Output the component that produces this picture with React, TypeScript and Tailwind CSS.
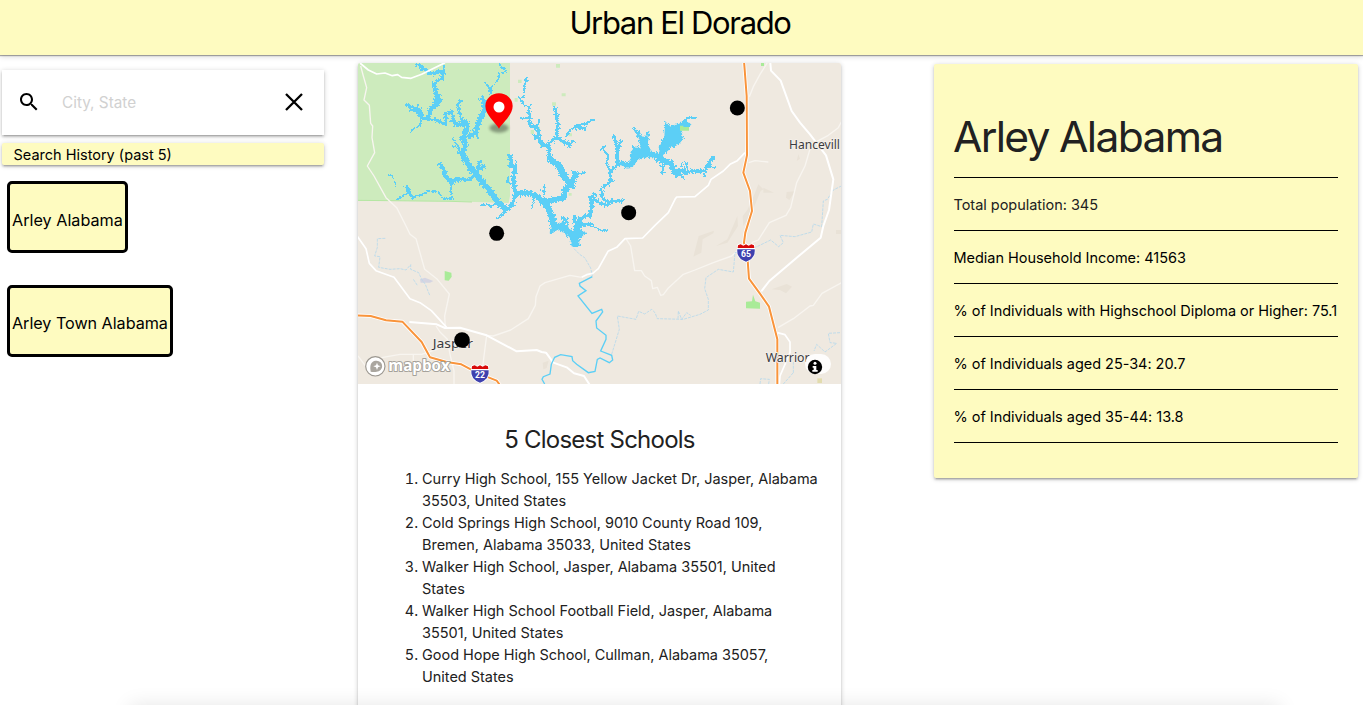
const schools = [
  ["Curry High School, 155 Yellow Jacket Dr, Jasper, Alabama", "35503, United States"],
  ["Cold Springs High School, 9010 County Road 109,", "Bremen, Alabama 35033, United States"],
  ["Walker High School, Jasper, Alabama 35501, United", "States"],
  ["Walker High School Football Field, Jasper, Alabama", "35501, United States"],
  ["Good Hope High School, Cullman, Alabama 35057,", "United States"],
];

const stats = [
  "Total population: 345",
  "Median Household Income: 41563",
  "% of Individuals with Highschool Diploma or Higher: 75.1",
  "% of Individuals aged 25-34: 20.7",
  "% of Individuals aged 35-44: 13.8",
];

const history = ["Arley Alabama", "Arley Town Alabama"];

const cardShadow =
  "shadow-[0_2px_2px_0_rgba(0,0,0,0.14),0_3px_1px_-2px_rgba(0,0,0,0.12),0_1px_5px_0_rgba(0,0,0,0.2)]";

/* Lake channels as [path, width], in map units (three to a pixel). */
const lake: [string, number][] = [
  ["M195 22 L215 28 L212 38 L228 40 L238 55 L262 45 L278 42 L276 62 L262 72 L248 86 L256 98 L254 112 L264 118 L270 134 L256 150 L240 155 L236 186", 8],
  ["M278 28 L280 50", 6],
  ["M256 98 L258 130 L244 156 L232 186", 8],
  ["M166 143 L178 150 L192 150", 7],
  ["M178 162 L195 160 L208 172 L212 184 L232 188 L262 190 L284 206 L286 172 L304 168 L310 192 L296 196", 8],
  ["M195 150 L208 165 L212 184", 12],
  ["M180 228 L190 214 L208 208 L212 184", 5],
  ["M310 202 L345 205", 12],
  ["M330 130 L322 148 L328 168 L334 196", 7],
  ["M340 190 L352 210 L338 245 L346 262", 14],
  ["M335 290 L346 262", 14],
  ["M328 282 L345 310 L360 335 L380 355 L400 382 L420 405 L440 435 L468 462", 16],
  ["M340 305 L365 340 L400 385", 10],
  ["M448 22 L452 34 L462 36 L466 46 L446 50 L440 75 L424 90 L420 115", 5],
  ["M403 75 L416 95 L420 115", 6],
  ["M392 122 L404 140 L400 165 L385 195 L378 225 L352 244", 13],
  ["M374 222 L384 246", 6],
  ["M306 245 L322 268 L300 272 M322 268 L328 290", 5],
  ["M265 320 L282 342 L285 360 L304 375 L325 365 L352 372 L380 352 L388 312 M388 340 L402 325", 9],
  ["M276 350 L300 378 L325 368", 9],
  ["M304 375 L300 405 L310 430 M304 425 L275 425 L265 408 L236 402 L210 415 L188 420 L172 408 L160 416 L138 431", 5],
  ["M165 388 L176 405 L190 425", 7],
  ["M112 356 L125 355 L127 368 M132 372 L138 390", 4],
  ["M468 462 L455 475 L436 488", 6],
  ["M388 446 L410 442 L420 450 L440 438", 5],
  ["M462 465 L486 445 L494 415", 11],
  ["M480 295 L482 325 L494 335 L488 368 L496 415", 11],
  ["M500 310 L492 335 M470 360 L472 378 L490 385", 6],
  ["M494 412 L530 408 L560 420 L580 435 L640 424 L645 396 L665 385 L675 345", 15],
  ["M665 362 L685 352 L704 348", 6],
  ["M662 386 L636 352 L628 330 L598 306", 18],
  ["M598 310 L594 268 L575 265 L560 242", 10],
  ["M572 250 L546 236 M566 240 L560 214 L538 206 L536 160", 8],
  ["M560 205 L568 190", 5],
  ["M536 160 L510 132 L502 118 M510 122 L520 120 L522 85 L528 64 L532 78", 5],
  ["M508 186 L534 186 M536 155 L542 140 M550 212 L562 232", 5],
  ["M594 262 L618 245 L622 200 L618 175 L612 150", 8],
  ["M618 240 L640 258 L662 262 L668 250 M650 255 L658 272", 8],
  ["M648 240 L658 220 L680 208 L710 200 L714 194 L732 190", 6],
  ["M675 212 L706 216", 9],
  ["M580 435 L596 458 L604 490 L610 512", 18],
  ["M580 430 L582 385 M582 402 L566 400 M552 418 L544 458", 5],
  ["M640 510 L638 480 M646 485 L652 505", 8],
  ["M675 500 L672 476 M680 498 L700 480 L718 478 L724 440 L718 425 L735 410", 10],
  ["M684 508 L700 500 L730 500", 6],
  ["M728 425 L748 440 L772 448 L780 432 L810 434 L824 428", 7],
  ["M770 438 L752 418 L754 395 L780 376 L778 345 L800 325 L825 318", 7],
  ["M780 376 L792 376 M780 345 L768 320 L775 300 L760 280 M752 282 L764 266", 6],
  ["M800 328 L800 275 L788 235 M800 280 L812 250", 8],
  ["M918 305 L960 320 L972 345 L982 360", 16],
  ["M936 315 L936 355 M972 340 L996 340 L1002 352 L1026 342 L1062 345 L1072 325 L1092 298", 8],
  ["M1072 330 L1098 334 M1064 345 L1062 360 M985 345 L1004 372 M1002 342 L1000 312 M1012 342 L1008 318 M992 335 L994 318", 5],
  ["M990 205 L1012 182 L1022 184 L1040 182", 5],
  ["M688 510 L715 504 L740 516 L755 524 L776 520", 5],
];

const lakeBasins = [
  "M798 320 L810 315 L838 322 L842 290 L848 272 L870 275 L866 248 L850 214 L862 225 L880 246 L894 225 L890 260 L900 285 L925 292 L928 270 L940 250 L942 225 L944 195 L956 210 L984 202 L1000 195 L1020 200 L1018 208 L994 214 L992 235 L1000 242 L985 262 L962 270 L942 288 L930 308 L890 300 L862 308 L845 332 L828 334 Z",
  "M594 478 L612 478 L616 502 L632 500 L650 508 L666 528 L672 512 L676 498 L692 500 L684 518 L706 530 L684 546 L684 571 L666 571 L658 546 L644 528 L622 520 L600 532 L603 508 Z",
];

const highways = [
  "M1182 15 L1190 120 L1191 298 L1180 350 L1200 405 L1206 465 L1186 530 L1182 560 L1192 600 L1197 668 L1232 716 L1257 752 L1282 850 L1282 984",
  "M20 778 L62 780 L108 793 L157 797 L215 858 L240 904 L290 918 L334 925 L385 952 L440 974 L455 994",
];

const parkRoad = "M30 21 L55 42 L80 54 L105 51 L127 59 L143 56 L155 64 L183 67 L215 55 L285 20";

const mainRoads: [string, number][] = [
  ["M20 538 L48 578 L58 622 L78 644 L132 664 L180 728 L210 740 L244 764 L290 814", 4],
  ["M178 798 L260 805 L285 816 L330 815 L410 838 L500 886 L560 882 L575 888 L588 890 L610 920 L650 934 L672 952 L702 960 L720 988", 5],
  ["M1260 10 L1263 44 L1292 74 L1325 165 L1350 200 L1380 235 L1428 298 L1450 370 L1437 462 L1420 510 L1412 545 L1358 590 L1258 675 L1234 706", 5],
  ["M1185 290 L1162 314 L1140 325 L1120 345 L1083 370 L1075 388 L1035 422 L980 423 L975 430 L955 470 L915 508 L878 546 L825 548 L800 574 L774 586 L745 638 L728 652 L710 656 L695 664", 4],
  ["M1282 830 L1305 836 L1320 858 L1320 890 L1290 960 L1288 985", 4],
];

const minorRoads = [
  "M32 30 L40 60 L50 95 L42 132 L58 148 L62 202 L68 210 L66 245 L74 290 L52 330 L72 360 L108 425 L140 455 L168 510 L180 535 L198 548 L224 640 L262 670 L298 714 L284 780 L286 812",
  "M695 664 L660 658 L585 680 L570 690 L558 722 L556 748 L535 788 L482 822 L430 840 L410 838 L402 900 L398 935",
  "M828 548 L842 570 L854 644 L874 644 L884 660 L904 674 L908 698 L922 694 L932 718 L940 716 L955 696 L1000 655 L1035 642 L1090 620 L1145 600 L1188 560",
  "M1252 20 L1230 55 L1210 92 L1198 122",
  "M1205 560 L1225 552 L1258 500 L1308 478 L1322 455 L1340 380 L1365 330 L1384 265 L1435 238 L1465 215 L1474 198",
  "M1284 815 L1330 788 L1380 750 L1390 748 L1416 712 L1475 680",
  "M258 810 L270 828 L292 850 L300 895 L312 945 L312 984 M24 900 L50 935 M95 905 L150 895 L215 895 L260 880 L290 866 M190 895 L190 920",
  "M1196 320 L1215 314 L1255 318",
];

const streams = [
  "M106 547 L82 548 L82 574 L74 600 L90 602 L86 634 L120 640 L150 638 L168 642 L182 626 L182 640 L206 650 L215 670 L226 685 L240 720 M190 670 L202 688",
  "M672 578 L690 596 L704 605 L722 636 L727 660",
  "M785 895 L808 820 L802 780 L858 790 L866 766 L884 774 L905 760 L915 770 L922 788 L1000 790 L1050 775 L1075 762 L1075 730 L1064 698 L1068 665 L1105 640 L1150 648 L1155 590 L1188 585 L1225 570 L1262 552 L1286 572 L1300 560 L1290 538 L1335 542 L1385 528 L1390 504 L1415 512 L1420 435 L1432 430 L1450 402 L1474 390",
  "M984 788 L985 765 L995 790 L1010 770 L1022 778",
  "M1470 830 L1435 832 L1440 860 L1460 862 L1425 888 L1400 865 L1392 885 M1330 950 L1330 920 L1345 905 M1230 984 L1232 968 L1258 970 L1256 984 M1300 984 L1330 950",
];

const river =
  "M727 662 L688 682 L690 690 L708 704 L684 720 L726 772 L755 760 L758 768 L738 795 L740 816 L768 838 L768 850 L752 885 L785 898 L788 912 L778 920 L750 906 L742 910 L735 946 L715 950 L680 925 L668 914 L666 902 L632 896 L614 904 L604 925 L600 954 L580 962 L576 970 L584 984";

const greens = [
  "M618 24 h12 v11 h-12 Z",
  "M504 71 h11 v10 h-11 Z",
  "M635 112 h12 v9 h-12 Z",
  "M606 139 h12 v10 h-12 Z",
  "M494 126 h9 v11 h-9 Z",
  "M656 232 h10 v9 h-10 Z M632 252 h10 v8 h-10 Z M542 222 h10 v12 h-10 Z M562 212 h8 v10 h-8 Z M656 411 h9 v8 h-9 Z M570 264 h8 v8 h-8 Z",
];

function Shield({ x, y, label }: { x: number; y: number; label: string }) {
  return (
    <g transform={`translate(${x} ${y})`}>
      <path d="M-27 -24 L-18 -29 L-9 -25 L0 -29 L9 -25 L18 -29 L27 -24 L28 0 Q24 20 0 29 Q-24 20 -28 0 Z" fill="#fff" />
      <path d="M-25 -15 L-24 -23 L-16 -26 L-8 -22 L0 -26 L8 -22 L16 -26 L24 -23 L25 -15 Z" fill="#d80a0a" />
      <path d="M-26 -11 H26 Q29 16 0 26 Q-29 16 -26 -11 Z" fill="#3f41ae" />
      <text y="13" textAnchor="middle" fontFamily="Roboto, sans-serif" fontWeight="700" fontSize="26" fill="#fff">
        {label}
      </text>
    </g>
  );
}

function TownLabel({ x, y, width, children }: { x: number; y: number; width: number; children: string }) {
  return (
    <text
      x={x}
      y={y}
      textLength={width}
      lengthAdjust="spacingAndGlyphs"
      fontFamily="'Noto Sans', sans-serif"
      fontSize="38"
      fill="#3b3b3f"
      stroke="#f4efe9"
      strokeWidth="6"
      strokeLinejoin="round"
      paintOrder="stroke"
    >
      {children}
    </text>
  );
}

function SchoolMap() {
  return (
    <svg className="block h-[321px] w-[483px] rounded-t-[2px]" viewBox="24 21 1449 963">
      <defs>
        <filter id="shore" x="0" y="0" width="100%" height="100%">
          <feTurbulence type="turbulence" baseFrequency="0.16" numOctaves="2" seed="4" result="n" />
          <feDisplacementMap in="SourceGraphic" in2="n" scale="6" xChannelSelector="R" yChannelSelector="G" />
        </filter>
        <filter id="soft" x="-50%" y="-100%" width="200%" height="300%">
          <feGaussianBlur stdDeviation="4" />
        </filter>
      </defs>
      <rect x="24" y="21" width="1449" height="963" fill="#efe9e0" />
      <path d="M24 21 H480 V420 L476 441 L300 436 L24 434 Z" fill="#cdebbd" />
      <path d="M24 433 L300 436 L366 438" fill="none" stroke="#b5e6a3" strokeWidth="3" />
      <g fill="#e9e2d7">
        <path d="M1215 410 L1225 385 L1240 400 L1232 405 L1205 470 L1180 510 L1178 480 L1192 462 Z M1240 395 L1272 410 L1240 410 Z M1310 408 L1335 406 L1318 432 L1308 425 Z M1340 315 L1345 295 L1350 308 Z" />
        <path d="M1030 602 L1046 540 L1092 524 L1090 532 L1058 550 L1054 590 Z M1098 570 L1132 550 L1162 480 L1164 510 L1132 560 Z M1265 700 L1310 684 L1326 692 L1308 712 L1290 702 Z M1458 522 h16 v12 h-16 Z M578 920 L596 914 L590 936 L580 940 Z" />
      </g>
      <path d="M210 670 L225 665 L250 675 L240 680 L212 680 Z" fill="#d5d5e2" />
      <path d="M284 645 L304 650 L305 662 L296 674 L284 673 Z" fill="#a9eb98" />
      <path d="M1188 737 L1206 736 L1209 716 L1216 736 L1230 740 L1230 758 L1188 757 Z" fill="#a9eb98" />
      <path d="M1233 21 h9 v9 h-9 Z" fill="#a9eb98" />
      <path d="M1402 967 h14 v14 h-14 Z" fill="#e2dcae" />
      <g fill="#cdebbd">
        {greens.map((d) => (
          <path key={d} d={d} />
        ))}
      </g>
      <g fill="none" stroke="#f8f5f0" strokeWidth="4" strokeLinejoin="round">
        {minorRoads.map((d) => (
          <path key={d} d={d} />
        ))}
      </g>
      <g fill="none" stroke="#b4d8ec" strokeWidth="2.4" strokeDasharray="9 3">
        {streams.map((d) => (
          <path key={d} d={d} />
        ))}
      </g>
      <g fill="none" stroke="#fff" strokeLinejoin="round">
        {mainRoads.map(([d, w]) => (
          <path key={d} d={d} strokeWidth={w + 1} />
        ))}
      </g>
      <g filter="url(#shore)">
        <g shapeRendering="crispEdges" fill="none" stroke="#5bcff6" strokeLinejoin="bevel">
          {lake.map(([d, w]) => (
            <path key={d} d={d} strokeWidth={w} />
          ))}
          {lake
            .filter(([, w]) => w > 6)
            .map(([d, w]) => (
              <path key={d + "spurs"} d={d} strokeWidth={w + 8} strokeDasharray="4 9 3 13" />
            ))}
          {lakeBasins.map((d) => (
            <path key={d} d={d} fill="#5bcff6" strokeWidth="2" />
          ))}
          {lakeBasins.map((d) => (
            <path key={d + "edge"} d={d} strokeWidth="9" strokeDasharray="4 13 3 10" />
          ))}
        </g>
      </g>
      <path d={river} fill="none" stroke="#5bcff6" strokeWidth="4" />
      <path d={parkRoad} fill="none" stroke="#fff" strokeWidth="5" strokeLinejoin="round" />
      <path d="M990 209 h10 v4 h17 v11 h-27 Z" fill="#a9eb98" />
      <g fill="none" strokeLinejoin="round">
        {highways.map((d) => (
          <path key={d} d={d} stroke="#fff" strokeWidth="11" />
        ))}
        {highways.map((d) => (
          <path key={d + "core"} d={d} stroke="#f9943b" strokeWidth="6" />
        ))}
      </g>

      <TownLabel x={1317} y={280} width={153}>Hancevill</TownLabel>
      <TownLabel x={248} y={875} width={121}>Jasper</TownLabel>
      <TownLabel x={1247} y={918} width={132}>Warrior</TownLabel>
      <Shield x={1188} y={591} label="65" />
      <Shield x={390} y={954} label="22" />

      <g fill="#000">
        <circle cx="1162" cy="156" r="22.5" />
        <circle cx="836" cy="470" r="22.5" />
        <circle cx="440" cy="532" r="22.5" />
        <circle cx="336" cy="852" r="23.5" />
      </g>

      <ellipse cx="447" cy="216" rx="29" ry="14" fill="#000" opacity="0.35" filter="url(#soft)" />
      <path d="M447 218 C439 202 406 178 406 150 A41 38 0 0 1 488 150 C488 178 455 202 447 218 Z" fill="#f00" />
      <circle cx="447" cy="153" r="16.5" fill="#fff" />

      <g>
        <circle cx="76" cy="931" r="29" fill="#fff" stroke="#9b9790" strokeWidth="3.5" />
        <path d="M62 947 C57 918 70 914 80 914 A16.5 16.5 0 0 1 80 947 C74 949 66 948 62 947 Z" fill="#aaa69f" />
        <path d="M81 920 L84 928 L92 931 L84 934 L81 942 L78 934 L70 931 L78 928 Z" fill="#fff" />
        <text
          x="115"
          y="945"
          textLength="184"
          lengthAdjust="spacingAndGlyphs"
          fontFamily="'Open Sans', sans-serif"
          fontWeight="700"
          fontSize="47"
          fill="#fff"
          stroke="#a5a19a"
          strokeWidth="6"
          strokeLinejoin="round"
          paintOrder="stroke"
        >
          mapbox
        </text>
      </g>

      <rect x="1365" y="894" width="78" height="60" rx="30" fill="#fff" fillOpacity="0.9" />
      <circle cx="1395" cy="933" r="21.5" fill="#000" />
      <circle cx="1395" cy="922" r="4.5" fill="#fff" />
      <path d="M1388 930 h11 v12 h4 v5 h-16 v-5 h4 v-7 h-3 Z" fill="#fff" />
    </svg>
  );
}

export default function App() {
  return (
    <div className="relative flex h-[705px] w-full flex-col overflow-hidden bg-white font-['Inter',sans-serif] text-[14.5px] leading-[22px] text-[#212121]">
      <header className="z-10 h-[55px] shrink-0 bg-[#fefbc0] pr-[3px] text-center text-black shadow-[0_1px_1px_0_rgba(0,0,0,0.32),0_2px_5px_0_rgba(0,0,0,0.14)]">
        <h1 className="text-[31px] leading-[45px] tracking-[-1.35px]">Urban El Dorado</h1>
      </header>

      <main className="flex items-start">
        <section className="ml-[2px] w-[322px] pt-[15px] text-black">
          <form className={`flex h-[65px] items-center bg-white ${cardShadow}`}>
            <svg className="mb-[2px] ml-[15px] size-6" viewBox="0 0 24 24" fill="#000">
              <path d="M15.5 14h-.79l-.28-.27C15.41 12.59 16 11.11 16 9.5 16 5.91 13.09 3 9.5 3S3 5.91 3 9.5 5.91 16 9.5 16c1.61 0 3.09-.59 4.23-1.57l.27.28v.79l5 4.99L20.49 19l-4.99-5zm-6 0C7.01 14 5 11.99 5 9.5S7.01 5 9.5 5 14 7.01 14 9.5 11.99 14 9.5 14z" />
            </svg>
            <span className="ml-[21px] flex-1 text-[15.3px] text-[#d1d1d1]">City, State</span>
            <svg className="mr-[18px] mb-[2px] size-6" viewBox="0 0 24 24" fill="none" stroke="#000" strokeWidth="2.3">
              <path d="M4 4 L20 20 M20 4 L4 20" />
            </svg>
          </form>
          <h2 className={`mt-2 h-[22px] rounded-[2px] bg-[#fefbc0] pl-[11.5px] leading-[24px] ${cardShadow}`}>
            Search History (past 5)
          </h2>
          <div className="mt-4 ml-[5px] flex flex-col items-start gap-8">
            {history.map((place, i) => (
              <button
                key={place}
                className={`h-[72px] rounded-[5px] border-3 border-black bg-[#fefbc0] px-[2px] text-[16.2px] whitespace-nowrap ${i === 0 ? "pt-[5px]" : "pt-[3px] tracking-[-0.05px]"}`}
              >
                {place}
              </button>
            ))}
          </div>
        </section>

        <section className={`mt-2 ml-[34px] h-[700px] w-[483px] rounded-[2px] bg-white ${cardShadow}`}>
          <SchoolMap />
          <h2 className="mt-[39px] text-center text-[24px] leading-[34px] tracking-[-0.77px]">5 Closest Schools</h2>
          <ol className="mt-[11px] ml-[64px] list-outside list-decimal tracking-[-0.02px]">
            {schools.map(([first, second]) => (
              <li key={first} className="whitespace-nowrap">
                {first}
                <br />
                {second}
              </li>
            ))}
          </ol>
        </section>

        <section className={`mt-[9px] ml-[93px] h-[414px] w-[424px] rounded-[2px] bg-[#fefbc0] px-5 pt-[44px] ${cardShadow}`}>
          <h2 className="h-[70px] border-b border-black -indent-[1px] text-[42.6px] leading-[58px] tracking-[-1.7px] whitespace-nowrap">
            Arley Alabama
          </h2>
          {stats.map((line, i) => (
            <p
              key={line}
              className={`h-[53px] border-b border-black pt-4 -indent-[0.5px] tracking-[-0.03px] whitespace-nowrap ${i === 0 ? "text-[#212121]" : "text-black"}`}
            >
              {line}
            </p>
          ))}
        </section>
      </main>

      <div className="absolute -bottom-10 left-[130px] h-10 w-[1150px] shadow-[0_0_20px_0_rgba(0,0,0,0.1)]" />
    </div>
  );
}
